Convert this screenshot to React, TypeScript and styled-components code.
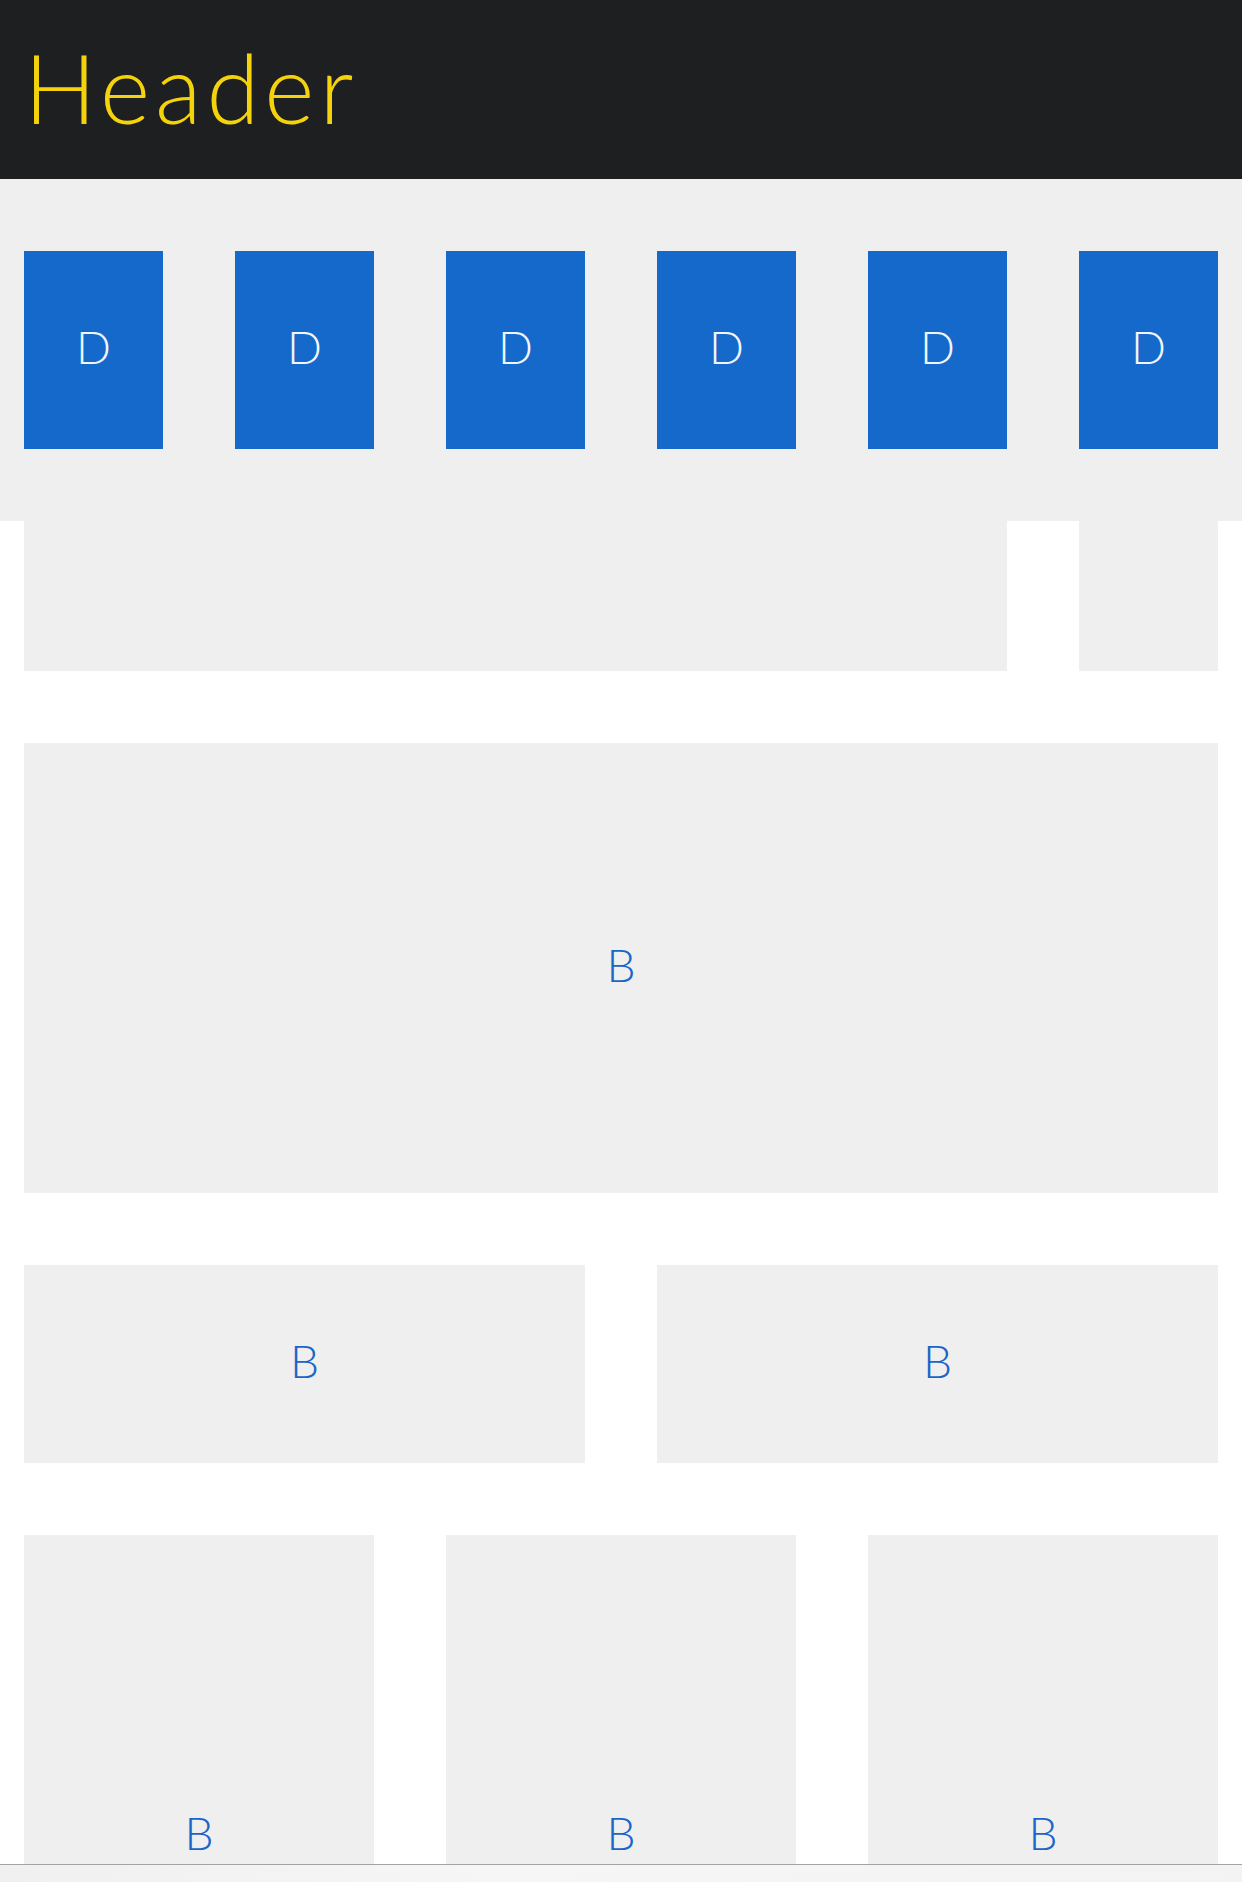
import styled, { createGlobalStyle } from 'styled-components';

const GlobalStyle = createGlobalStyle`
	html, body {
		margin: 0;
		padding: 0;
		background: #ffffff;
		font-family: Lato, 'Open Sans', 'Liberation Sans', sans-serif;
		font-weight: 300;
	}
	* {
		box-sizing: border-box;
	}
`;

type Span = { span: number };

const rows: { height: number; cells: number[]; label?: boolean }[] = [
	{ height: 150, cells: [5, 1] },
	{ height: 450, cells: [6], label: true },
	{ height: 198, cells: [3, 3], label: true },
	{ height: 602, cells: [2, 2, 2], label: true },
];

const App = () => (
	<>
		<GlobalStyle />
		<Page>
			<Header>
				<Title>Header</Title>
			</Header>
			<DockPanel>
				{Array.from({ length: 6 }).map((_, i) => (
					<DockItem key={i}>D</DockItem>
				))}
			</DockPanel>
			<Body>
				{rows.map((row, r) => (
					<Row key={r}>
						{row.cells.map((span, c) => (
							<Block key={c} span={span} style={{ height: row.height }}>
								{row.label && 'B'}
							</Block>
						))}
					</Row>
				))}
			</Body>
		</Page>
		<ScrollTrack />
	</>
);

const Page = styled.div`
	min-height: 100vh;
	display: flex;
	flex-direction: column;
`;

const Header = styled.header`
	height: 179px;
	background: #1e1f21;
	display: flex;
	align-items: center;
	padding: 0 24px 5px;
`;

const Title = styled.h1`
	margin: 0;
	font-size: 96px;
	font-weight: 300;
	color: #f5d30c;
	line-height: 1;
	letter-spacing: 5px;
`;

const DockPanel = styled.div`
	background: #efefef;
	padding: 72px 24px;
	display: grid;
	grid-template-columns: repeat(6, 1fr);
	column-gap: 72px;
`;

const DockItem = styled.div`
	height: 198px;
	padding-bottom: 7px;
	background: #1469cb;
	color: #f2f6fc;
	font-size: 46px;
	display: flex;
	align-items: center;
	justify-content: center;
`;

const Body = styled.main`
	padding: 0 24px;
	display: flex;
	flex-direction: column;
	gap: 72px;
`;

const Row = styled.div`
	display: grid;
	grid-template-columns: repeat(6, 1fr);
	column-gap: 72px;
`;

const Block = styled.div<Span>`
	grid-column: span ${({ span }) => span};
	padding-bottom: 7px;
	background: #efefef;
	color: #1a66c8;
	font-size: 46px;
	display: flex;
	align-items: center;
	justify-content: center;
`;

const ScrollTrack = styled.div`
	position: fixed;
	left: 0;
	right: 0;
	bottom: 0;
	height: 18px;
	border-top: 1px solid #a3a3a3;
	background: linear-gradient(90deg, #f0f0f0 0%, #f6f6f6 40%, #f3f3f3 100%);
`;

export default App;
